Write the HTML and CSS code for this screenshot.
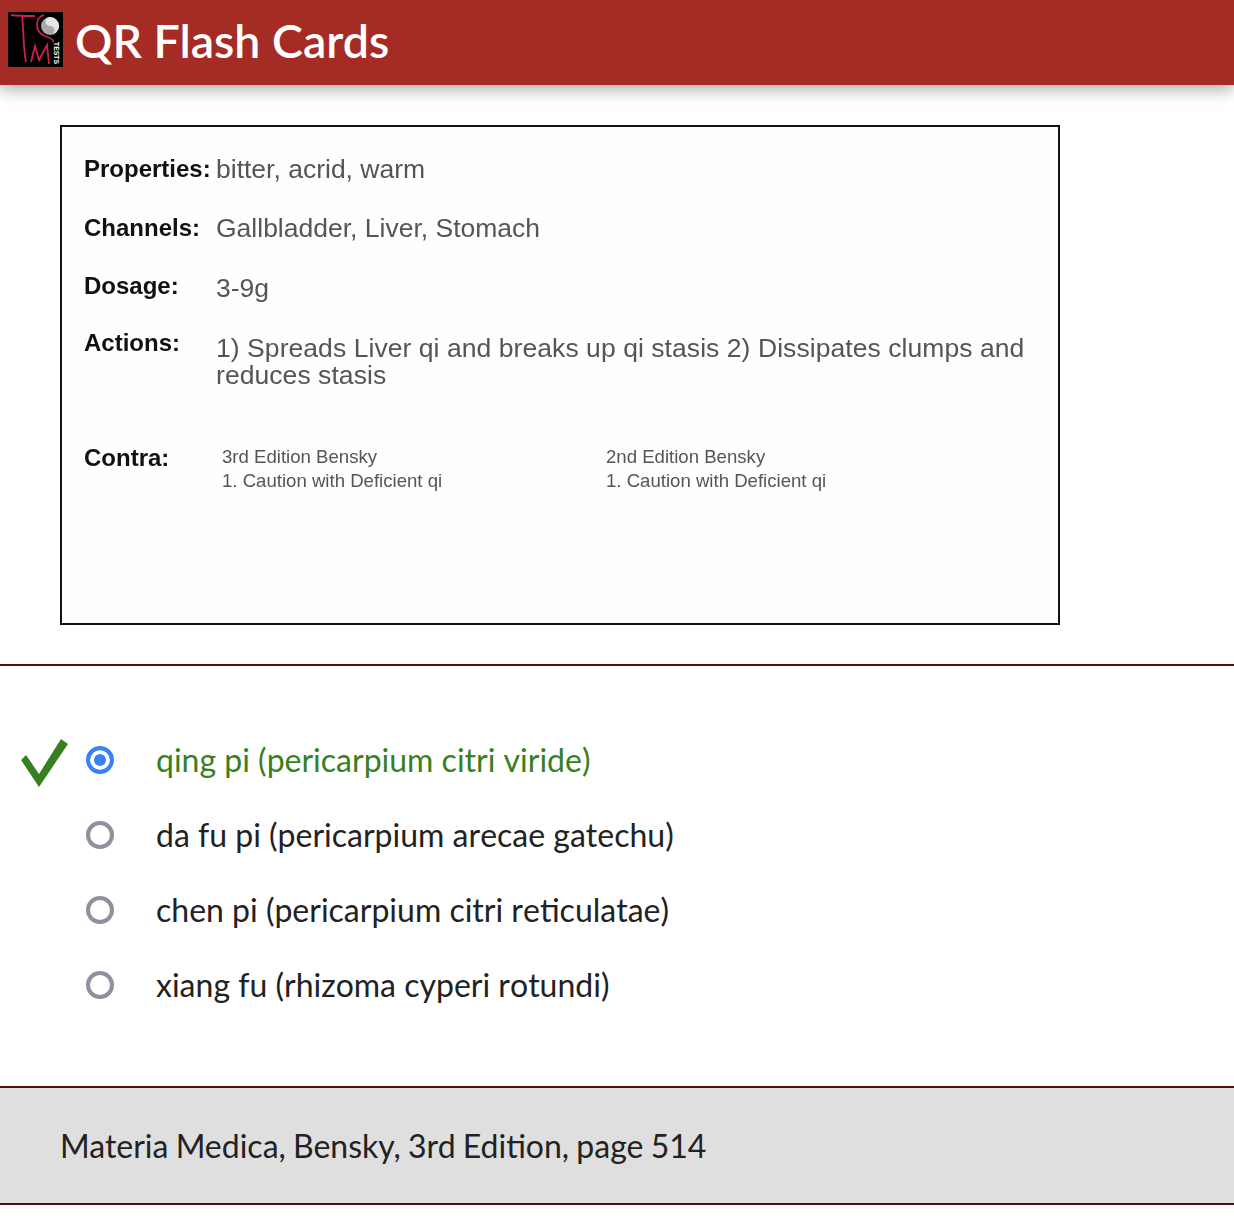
FILE: index.html
```html
<!DOCTYPE html>
<html lang="en">
<head>
    <meta charset="UTF-8">
    <meta name="viewport" content="width=device-width, initial-scale=1.0">
    <title>QR Flash Cards</title>
    <link rel="stylesheet" href="styles.css">
</head>
<body>
    <header class="top-bar">
        <svg class="logo" viewBox="0 0 55 55" width="55" height="55" aria-hidden="true">
            <rect width="55" height="55" fill="#000"/>
            <g stroke="#c9204f" stroke-width="1.800" fill="none">
                <path d="M3 3C10 4 20 4 27 4"/>
                <path d="M14 4C16 18 15 36 18 50"/>
                <path d="M23 50L27 34L31 48L39 33L41 52"/>
                <path d="M36 3C27 5 26 20 37 24C40 25 44 26 46 30"/>
            </g>
            <circle cx="42" cy="14" r="9" fill="#a9a9a9"/>
            <path d="M42 5a9 9 0 0 1 0 18a4.500 4.500 0 0 0 0-9a4.500 4.500 0 0 1 0-9z" fill="#e6e6e6"/>
            <text class="logo-tests" transform="translate(46 30) rotate(90)" textLength="22" lengthAdjust="spacingAndGlyphs">TESTS</text>
        </svg>
        <h1 class="app-title">QR Flash Cards</h1>
    </header>

    <section class="card-wrap">
        <div class="flash-card">
            <div class="card-row row-properties">
                <div class="card-label">Properties:</div>
                <div class="card-value">bitter, acrid, warm</div>
            </div>
            <div class="card-row row-channels">
                <div class="card-label">Channels:</div>
                <div class="card-value">Gallbladder, Liver, Stomach</div>
            </div>
            <div class="card-row row-dosage">
                <div class="card-label">Dosage:</div>
                <div class="card-value value-dosage">3-9g</div>
            </div>
            <div class="card-row row-actions">
                <div class="card-label">Actions:</div>
                <div class="card-value value-actions">1) Spreads Liver qi and breaks up qi stasis 2) Dissipates clumps and reduces stasis</div>
            </div>
            <div class="card-row row-contra">
                <div class="card-label">Contra:</div>
                <div class="contra-cols">
                    <div class="contra-col">3rd Edition Bensky<br>1. Caution with Deficient qi</div>
                    <div class="contra-col">2nd Edition Bensky<br>1. Caution with Deficient qi</div>
                </div>
            </div>
        </div>
    </section>

    <form class="answers">
        <label class="answer correct">
            <svg class="check" viewBox="0 0 48 48" width="48" height="48" aria-hidden="true">
                <polygon points="1,21 6,16 19,35 41,0 48,5 19,48" fill="#38801f"/>
            </svg>
            <input type="radio" name="answer" checked>
            <span>qing pi (pericarpium citri viride)</span>
        </label>
        <label class="answer">
            <input type="radio" name="answer">
            <span>da fu pi (pericarpium arecae gatechu)</span>
        </label>
        <label class="answer">
            <input type="radio" name="answer">
            <span>chen pi (pericarpium citri reticulatae)</span>
        </label>
        <label class="answer">
            <input type="radio" name="answer">
            <span>xiang fu (rhizoma cyperi rotundi)</span>
        </label>
    </form>

    <footer class="reference">Materia Medica, Bensky, 3rd Edition, page 514</footer>
</body>
</html>
```

FILE: styles.css
```css
body {
    margin: 0;
    font-family: Lato, sans-serif;
    color: #222222;
    background-color: white;
}

.top-bar {
    display: flex;
    align-items: center;
    gap: 12px;
    height: 85px;
    padding-left: 8px;
    padding-bottom: 5px;
    box-sizing: border-box;
    background-color: #a52b25;
    box-shadow: 0 4px 16px rgba(0, 0, 0, 0.35);
}

.logo {
    margin-bottom: 2px;
}

.logo-tests {
    font-family: "Liberation Sans", sans-serif;
    font-size: 8px;
    font-weight: bold;
    fill: white;
}

.app-title {
    margin: 0;
    font-size: 46.500px;
    font-weight: 600;
    color: white;
}

.card-wrap {
    padding: 40px 0 39px 60px;
    border-bottom: 2px solid #4f0f10;
}

.flash-card {
    width: 1000px;
    height: 500px;
    box-sizing: border-box;
    border: 2px solid #111111;
    padding: 0 22px;
    font-family: "Liberation Sans", sans-serif;
    color: #555555;
    background-color: #fefefe;
}

.card-row {
    display: grid;
    grid-template-columns: 132px 1fr;
}

.card-label {
    font-size: 24px;
    line-height: 28px;
    font-weight: bold;
    color: #111111;
    filter: blur(0.3px);
}

.card-value {
    font-size: 26.500px;
    line-height: 28px;
    filter: blur(0.5px);
}

.row-properties { margin-top: 28px; }
.row-channels { margin-top: 31px; }
.row-dosage { margin-top: 30px; }
.row-actions { margin-top: 27px; }
.row-contra { margin-top: 55px; }

.value-dosage {
    padding-top: 2px;
}

.value-actions {
    padding-top: 6px;
    line-height: 27px;
    letter-spacing: 0.06px;
}

.contra-cols {
    display: grid;
    grid-template-columns: 384px 1fr;
    padding: 1px 0 0 6px;
    font-size: 18.600px;
    line-height: 24px;
    filter: blur(0.5px);
}

.answers {
    padding: 56px 0 64px;
    border-bottom: 2px solid #4f0f10;
}

.answer {
    position: relative;
    display: flex;
    align-items: center;
    height: 75px;
    padding-left: 86px;
    font-size: 32px;
    font-kerning: none;
}

.answer input {
    appearance: none;
    width: 28px;
    height: 28px;
    margin: 0 42px 0 0;
    box-sizing: border-box;
    border: 4px solid #8f8f9d;
    border-radius: 50%;
    background-color: white;
}

.answer input:checked {
    border-color: #3b82f6;
    background-color: #3b82f6;
    box-shadow: inset 0 0 0 4px white;
}

.correct {
    color: #38801f;
}

.check {
    position: absolute;
    left: 20px;
    top: 17px;
}

.reference {
    margin-bottom: 18px;
    padding: 35px 60px 0;
    height: 117px;
    box-sizing: border-box;
    background-color: #dfdfdf;
    border-bottom: 2px solid #4f0f10;
    font-size: 32px;
    line-height: 46px;
    word-spacing: -1px;
}
```
